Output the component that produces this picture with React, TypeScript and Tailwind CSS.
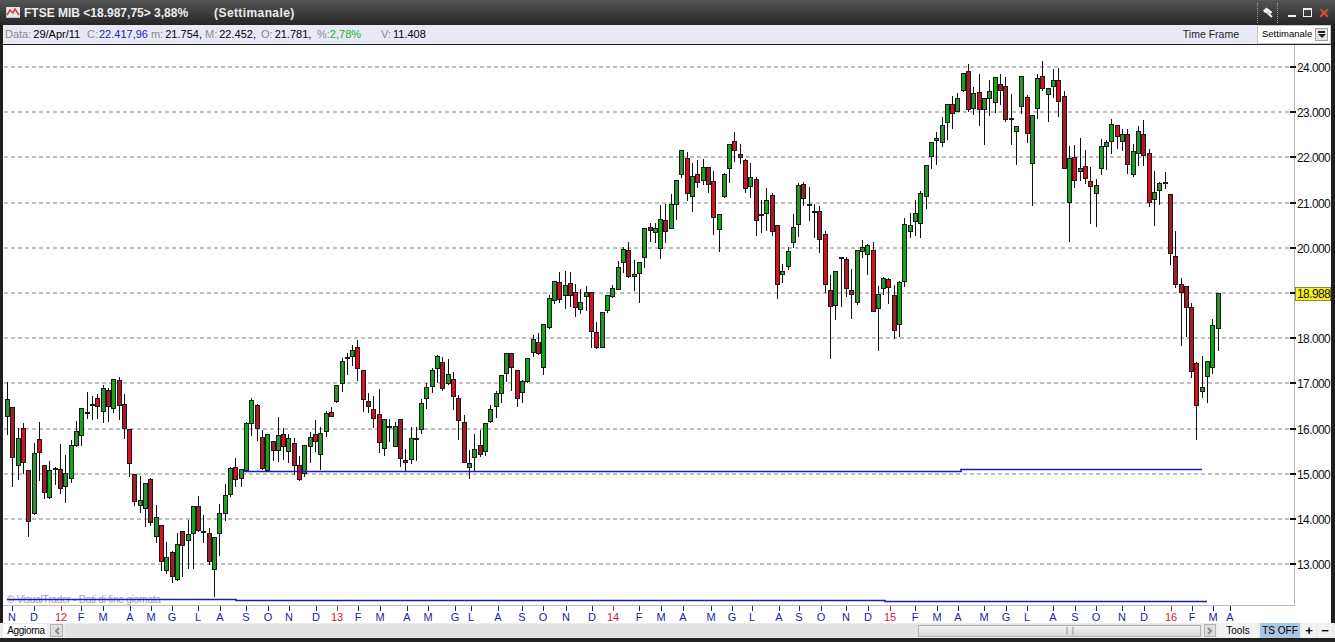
const FONT = "font-['Liberation_Sans',Arial,sans-serif]";

type Row = [number, number, number, number, string];

// candles, read off in 3x crop units: [wick top, wick bottom, body top, body bottom, colour]
const groups: { base: number; rows: Row[] }[] = [
  {
    base: 370,
    rows: [
      [35, 195, 88, 142, "g"], [110, 350, 112, 265, "d"], [175, 330, 205, 287, "g"], [160, 312, 175, 280, "r"],
      [300, 500, 301, 455, "d"], [218, 436, 250, 431, "g"], [156, 332, 208, 248, "r"], [285, 388, 286, 370, "d"],
      [273, 386, 301, 385, "G"], [292, 345, 293, 299, "d"], [222, 372, 298, 358, "d"], [255, 398, 310, 352, "g"],
      [210, 338, 226, 328, "G"], [152, 232, 184, 228, "g"], [115, 228, 115, 199, "G"], [65, 148, 125, 128, "k"],
      [78, 150, 103, 105, "k"], [72, 148, 85, 112, "r"], [45, 158, 55, 125, "g"], [55, 155, 61, 112, "d"],
      [28, 128, 28, 118, "G"], [22, 150, 31, 109, "d"], [72, 207, 103, 178, "d"], [178, 322, 178, 283, "r"],
      [313, 408, 313, 397, "d"], [318, 428, 391, 409, "g"], [338, 470, 340, 418, "g"], [325, 467, 328, 458, "d"],
      [405, 520, 442, 500, "g"], [466, 602, 466, 577, "r"], [516, 612, 562, 604, "g"], [543, 640, 547, 620, "d"],
      [490, 632, 523, 631, "G"], [483, 620, 484, 529, "d"], [450, 597, 493, 512, "g"], [408, 597, 409, 493, "G"],
      [378, 485, 409, 484, "d"], [435, 518, 484, 487, "k"], [475, 586, 490, 575, "d"], [502, 680, 502, 601, "g"],
      [403, 557, 430, 493, "G"], [343, 452, 374, 433, "G"], [290, 380, 295, 376, "g"], [264, 352, 292, 329, "r"],
      [298, 350, 298, 328, "g"], [155, 305, 160, 302, "G"], [85, 197, 91, 163, "G"], [103, 212, 105, 178, "d"],
    ],
  },
  {
    base: 270,
    rows: [
      [480, 600, 502, 598, "d"], [492, 604, 493, 603, "G"], [514, 572, 514, 542, "d"], [442, 575, 496, 544, "g"],
      [474, 570, 492, 532, "r"], [492, 578, 505, 545, "g"], [505, 615, 520, 587, "d"], [558, 632, 586, 631, "r"],
      [526, 620, 526, 613, "g"], [487, 578, 502, 530, "g"], [450, 545, 493, 517, "r"], [470, 600, 488, 556, "g"],
      [422, 502, 430, 485, "g"], [412, 440, 427, 440, "r"], [346, 398, 346, 397, "g"], [265, 365, 273, 341, "g"],
      [248, 314, 262, 265, "k"], [225, 288, 241, 260, "g"], [210, 332, 232, 298, "r"], [300, 425, 301, 391, "r"],
      [370, 428, 394, 410, "d"], [378, 475, 418, 446, "r"], [358, 548, 433, 520, "r"], [446, 558, 448, 538, "g"],
      [447, 515, 468, 470, "k"], [455, 532, 469, 530, "g"], [448, 592, 448, 566, "d"], [538, 605, 571, 578, "d"],
      [472, 582, 505, 571, "G"], [470, 573, 505, 509, "k"], [388, 492, 400, 479, "G"], [338, 417, 352, 386, "G"],
      [295, 368, 300, 352, "g"], [256, 338, 259, 298, "G"], [262, 362, 277, 356, "d"], [267, 345, 313, 341, "g"],
      [305, 420, 328, 382, "r"], [376, 510, 385, 454, "d"], [436, 578, 457, 578, "d"], [540, 626, 580, 593, "g"],
      [492, 606, 538, 563, "g"], [480, 560, 526, 554, "d"], [458, 558, 460, 547, "G"], [406, 460, 418, 456, "g"],
      [362, 444, 370, 412, "g"], [314, 398, 315, 371, "G"], [250, 336, 250, 313, "g"], [250, 362, 250, 295, "d"],
      [300, 410, 301, 386, "r"],
    ],
  },
  {
    base: 320,
    rows: [
      [180, 248, 183, 218, "g"], [113, 190, 115, 185, "G"], [45, 110, 58, 100, "g"], [40, 105, 67, 103, "d"],
      [12, 165, 13, 143, "G"],
    ],
  },
  {
    base: 130,
    rows: [
      [495, 597, 505, 595, "G"], [452, 522, 454, 512, "g"], [427, 518, 457, 510, "r"], [423, 537, 466, 497, "g"],
      [427, 530, 460, 497, "d"], [462, 560, 487, 533, "r"], [478, 552, 515, 539, "g"], [468, 542, 487, 500, "g"],
      [487, 653, 487, 607, "r"], [577, 658, 607, 653, "r"], [545, 655, 547, 653, "g"], [495, 550, 496, 542, "G"],
      [465, 505, 475, 500, "g"], [393, 480, 412, 479, "g"], [350, 428, 358, 398, "G"], [335, 443, 361, 442, "d"],
      [390, 482, 433, 442, "g"], [397, 518, 397, 433, "G"], [293, 413, 295, 385, "g"], [278, 335, 290, 302, "d"],
      [280, 338, 295, 308, "g"], [225, 388, 268, 358, "G"], [222, 340, 271, 307, "d"], [192, 298, 223, 298, "G"],
      [150, 270, 151, 226, "g"], [60, 145, 61, 136, "g"], [65, 212, 85, 193, "r"], [100, 245, 137, 200, "g"],
      [90, 173, 133, 160, "r"], [88, 165, 112, 154, "G"], [110, 188, 112, 166, "d"], [124, 315, 154, 265, "r"],
      [253, 365, 253, 301, "G"], [130, 205, 133, 202, "g"], [42, 160, 43, 118, "G"], [7, 95, 34, 62, "r"],
      [42, 102, 73, 85, "d"], [88, 188, 91, 176, "r"], [100, 203, 142, 170, "g"], [140, 318, 148, 272, "d"],
      [210, 308, 253, 257, "k"], [175, 302, 211, 253, "G"],
      [190, 318, 196, 305, "d"], [285, 506, 286, 464, "r"], [403, 460, 424, 434, "g"], [352, 420, 364, 410, "G"],
      [252, 355, 292, 338, "g"], [160, 320, 166, 284, "g"], [156, 228, 163, 208, "d"], [172, 272, 222, 224, "k"],
      [222, 323, 244, 248, "k"], [228, 368, 244, 329, "d"], [304, 488, 313, 464, "r"], [435, 686, 481, 530, "d"],
      [422, 570, 424, 529, "g"], [382, 530, 382, 386, "k"], [380, 502, 388, 478, "d"], [418, 566, 481, 494, "d"],
      [360, 526, 361, 520, "g"], [330, 383, 352, 365, "g"], [343, 435, 344, 374, "G"], [337, 545, 361, 545, "r"],
      [468, 662, 493, 536, "g"], [442, 494, 443, 478, "G"], [445, 521, 446, 473, "r"], [465, 626, 496, 602, "d"],
      [454, 622, 455, 584, "G"], [265, 470, 283, 455, "G"], [248, 323, 286, 307, "g"], [210, 318, 250, 275, "g"],
    ],
  },
  {
    base: 55,
    rows: [
      [408, 548, 414, 508, "G"], [330, 461, 330, 425, "g"], [262, 342, 262, 305, "G"], [232, 330, 250, 258, "g"],
      [187, 275, 210, 263, "g"], [148, 255, 148, 203, "G"], [123, 222, 148, 176, "r"], [115, 172, 130, 172, "g"],
      [53, 110, 54, 108, "G"], [27, 172, 48, 166, "d"], [97, 180, 115, 161, "g"], [57, 213, 112, 166, "r"],
      [128, 270, 130, 164, "g"], [75, 183, 109, 131, "g"], [65, 175, 67, 143, "G"], [57, 150, 88, 107, "d"],
    ],
  },
  {
    base: 50,
    rows: [
      [82, 215, 109, 209, "d"], [132, 285, 205, 209, "k"], [228, 345, 229, 245, "g"], [78, 192, 79, 172, "g"],
      [135, 278, 142, 253, "r"], [196, 467, 196, 341, "g"], [72, 206, 85, 176, "G"], [33, 122, 79, 118, "r"],
      [115, 215, 115, 136, "g"], [57, 143, 91, 112, "G"], [54, 200, 91, 155, "r"], [124, 358, 139, 358, "d"],
      [288, 575, 325, 460, "G"], [286, 413, 322, 394, "r"], [265, 392, 355, 367, "g"], [300, 402, 349, 388, "r"],
      [352, 521, 394, 412, "r"], [387, 530, 406, 433, "g"], [268, 375, 289, 358, "G"], [270, 360, 277, 290, "g"],
      [208, 311, 223, 277, "G"], [225, 296, 226, 262, "r"], [238, 304, 253, 277, "g"], [238, 371, 253, 346, "d"],
      [282, 382, 304, 376, "G"], [228, 347, 244, 313, "g"], [210, 347, 253, 319, "d"], [298, 470, 310, 458, "r"],
      [363, 527, 427, 451, "g"], [397, 464, 398, 424, "g"], [366, 417, 397, 403, "d"],
    ],
  },
  {
    base: 190,
    rows: [
      [13, 225, 13, 193, "d"], [123, 295, 199, 284, "d"], [265, 467, 283, 308, "d"], [288, 442, 289, 355, "d"],
      [340, 563, 352, 547, "d"], [517, 750, 518, 647, "r"], [498, 625, 592, 607, "g"], [514, 638, 514, 562, "G"],
      [388, 552, 406, 535, "G"], [310, 482, 310, 418, "g"],
    ],
  },
];

const FILL: Record<string, string> = {
  g: "#2c9230",
  G: "#10a816",
  r: "#dc0f1c",
  d: "#a31f28",
  k: "#111111",
};

const candles = groups.flatMap((g) =>
  g.rows.map((r) => ({
    wt: Math.round(g.base + r[0] / 3),
    wb: Math.round(g.base + r[1] / 3),
    bt: Math.round(g.base + r[2] / 3),
    bb: Math.round(g.base + r[3] / 3),
    c: r[4],
  })),
);

const levels: [string, number][] = [
  ["24.000", 67], ["23.000", 112], ["22.000", 157], ["21.000", 203], ["20.000", 248],
  ["", 293], ["18.000", 338], ["17.000", 383], ["16.000", 429], ["15.000", 474],
  ["14.000", 519], ["13.000", 564],
];

const months: [string, number][] = [
  ["N", 12], ["D", 34], ["12", 61], ["F", 81], ["M", 103], ["A", 130], ["M", 151], ["G", 172], ["L", 198], ["A", 220],
  ["S", 246], ["O", 268], ["N", 289], ["D", 316], ["13", 337], ["F", 358], ["M", 380], ["A", 407], ["M", 428], ["G", 455],
  ["L", 471], ["A", 498], ["S", 522], ["O", 543], ["N", 566], ["D", 592], ["14", 613], ["F", 639], ["M", 661], ["A", 683],
  ["M", 711], ["G", 732], ["L", 752], ["A", 779], ["S", 799], ["O", 821], ["N", 846], ["D", 868], ["15", 890], ["F", 915],
  ["M", 937], ["A", 958], ["M", 984], ["G", 1006], ["L", 1027], ["A", 1053], ["S", 1075], ["O", 1096], ["N", 1122],
  ["D", 1144], ["16", 1171], ["F", 1192], ["M", 1213], ["A", 1230],
];

function Chart() {
  return (
    <svg viewBox="3 45 1328 578" width={1328} height={578} className="block">
      <rect x={3} y={45} width={1328} height={578} fill="#ffffff" />
      {levels.map(([, y]) => (
        <line key={y} x1={4} x2={1290} y1={y} y2={y} stroke="#c0c0c0" strokeWidth={2} strokeDasharray="4 3" />
      ))}
      <g shapeRendering="crispEdges">
        {candles.map((k, i) => {
          const cx = Math.round(7 + i * 5.31);
          return (
            <g key={i}>
              <rect x={cx} y={k.wt} width={1} height={Math.max(k.wb - k.wt, 1)} fill="#111111" />
              <rect
                x={cx - 1.5}
                y={k.bt + 0.5}
                width={4}
                height={Math.max(k.bb - k.bt - 1, 1)}
                fill={FILL[k.c]}
                stroke="#1a1a1a"
                strokeWidth={1}
              />
            </g>
          );
        })}
      </g>

      <text x={7} y={603} fontFamily="Liberation Sans, Arial, sans-serif" fontSize={10} letterSpacing={-0.2} fill="#9c9cc8">
        © VisualTrader - Dati di fine giornata
      </text>

      <g fill="none" stroke="#1c1cb0" strokeWidth={1.6}>
        <path d="M243 471.5H961V469.5H1202" />
        <path d="M7 599.5H236V600.5H885V601.5H1207" />
      </g>

      <g shapeRendering="crispEdges">
        <rect x={1294} y={45} width={1} height={560} fill="#b8b8b8" />
        <rect x={3} y={605} width={1292} height={1} fill="#bcbcbc" />
        {levels.map(([, y]) => (
          <rect key={y} x={1290} y={y - 1} width={6} height={2} fill="#111111" />
        ))}
        {months.map(([m, x], i) => (
          <rect key={i} x={x} y={606} width={1} height={5} fill={m.length === 2 ? "#cc2233" : "#222266"} />
        ))}
      </g>

      <g fontFamily="Liberation Sans, Arial, sans-serif" fontSize={12} letterSpacing={-0.6} fill="#111111">
        {levels.map(([label, y]) =>
          label ? (
            <text key={y} x={1297} y={y + 5}>
              {label}
            </text>
          ) : null,
        )}
      </g>

      <rect x={1295.5} y={287.5} width={35} height={13} fill="#f9f21c" stroke="#8a8a30" />
      <text x={1297} y={298} fontFamily="Liberation Sans, Arial, sans-serif" fontSize={12} letterSpacing={-0.6} fill="#111111">
        18.988
      </text>

      <g fontFamily="Liberation Sans, Arial, sans-serif" fontSize={11} textAnchor="middle">
        {months.map(([m, x], i) => (
          <text key={i} x={x} y={621} fill={m.length === 2 ? "#d01a2c" : "#1c1ca8"}>
            {m}
          </text>
        ))}
      </g>
    </svg>
  );
}

function InfoCell({ label, value, width, tone = "text-black" }: { label: string; value: string; width: string; tone?: string }) {
  return (
    <div className={`flex shrink-0 overflow-hidden whitespace-nowrap ${width}`}>
      <span className="text-[#8a8a8a]">{label}</span>
      <span className={tone}>{value}</span>
    </div>
  );
}

function ChartIcon() {
  return (
    <svg width={14} height={11} viewBox="0 0 14 11">
      <rect x={0} y={0} width={14} height={11} fill="#e4e8f4" />
      <path d="M0 0v11h14" fill="none" stroke="#8f9ac8" />
      <path d="M1 8 4 3l3 3 2-4 4 6" fill="none" stroke="#d8402a" strokeWidth={1.5} />
    </svg>
  );
}

function HammerIcon() {
  return (
    <svg width={11} height={11} viewBox="0 0 11 11">
      <path d="M1 3.5 4.5 0.5 10.5 5 8.5 7 5.5 4.5 3 6Z" fill="#f2f2f2" />
      <path d="M4.5 5 10 10" stroke="#f2f2f2" strokeWidth={2} />
    </svg>
  );
}

export default function App() {
  return (
    <div className={`flex h-[642px] w-[1335px] flex-col overflow-hidden bg-[#1e1e1e] ${FONT}`}>
      {/* Title bar */}
      <header className="flex h-[25px] shrink-0 items-center bg-gradient-to-b from-[#565656] to-[#262626] pl-[6px] text-[#ececec]">
        <ChartIcon />
        <span className="ml-[4px] text-[12px] font-bold">FTSE MIB &lt;18.987,75&gt; 3,88%</span>
        <span className="ml-[26px] text-[12px] font-bold tracking-[0.4px]">(Settimanale)</span>
        <div className="ml-auto flex items-center">
          <div className="flex h-[20px] w-[21px] items-center justify-center border-x border-dotted border-[#9a9a9a]">
            <HammerIcon />
          </div>
          <div className="ml-[10px] h-[2px] w-[8px] translate-y-[3px] bg-[#f0f0f0]" />
          <div className="ml-[7px] h-[9px] w-[9px] border border-t-2 border-[#f0f0f0]" />
          <div className="ml-[6px] mr-[7px] w-[10px] text-center text-[14px] leading-none font-bold text-[#d8502c]">✕</div>
        </div>
      </header>

      <div className="flex min-h-0 flex-1 flex-col pl-[3px] pr-[4px]">
        {/* Quote strip */}
        <div className="flex h-[20px] shrink-0 items-center border-b border-[#222222] bg-[#e9e9f6] pl-[2px] text-[11px]">
          <InfoCell label="Data:" value="29/Apr/11" width="w-[82px]" tone="text-black pl-[2px]" />
          <InfoCell label="C:" value=" 22.417,96" width="w-[64px]" tone="text-[#1a1ab0] pl-[1px]" />
          <InfoCell label="m:" value=" 21.754," width="w-[54px]" tone="pl-[2px]" />
          <InfoCell label="M:" value=" 22.452," width="w-[56px]" tone="pl-[2px]" />
          <InfoCell label="O:" value=" 21.781," width="w-[56px]" tone="pl-[2px]" />
          <InfoCell label="%:" value="2,78%" width="w-[64px]" tone="text-[#18b030]" />
          <InfoCell label="V:" value=" 11.408" width="w-[60px]" tone="pl-[2px]" />
          <span className="ml-auto mr-[18px] text-[10.5px] text-[#222222]">Time Frame</span>
          <div className="flex h-[19px] w-[74px] items-center justify-between border border-[#c8c8c8] bg-white pl-[4px] pr-[2px] text-[9.5px] text-black">
            <span>Settimanale</span>
            <div className="flex h-[13px] w-[13px] flex-col items-center justify-center gap-[1px] border border-[#a0a0a0] bg-[#e4e4e4]">
              <div className="h-[2px] w-[7px] bg-[#222222]" />
              <div className="h-0 w-0 border-x-[4px] border-t-[4px] border-x-transparent border-t-[#222222]" />
            </div>
          </div>
        </div>

        <Chart />
      </div>

      {/* Bottom toolbar */}
      <footer className="flex h-[15px] shrink-0 items-center gap-[2px] bg-[#ececec] pl-[3px] text-[10px] text-black">
        <div className="flex h-[14px] w-[44px] items-center justify-center bg-white pl-[2px] tracking-[-0.3px]">Aggiorna</div>
        <div className="ml-[1px] flex h-[13px] w-[13px] items-center justify-center border border-[#b0b0b0] bg-[#dedede] text-[#8a8a8a]">
          <svg width={6} height={8} viewBox="0 0 6 8">
            <path d="M5 1 2 4l3 3" fill="none" stroke="currentColor" strokeWidth={2} />
          </svg>
        </div>
        <div className="flex h-[13px] flex-1 items-center bg-[#e2e2e2]">
          <div className="ml-[853px] flex h-[12px] w-[283px] items-center justify-center border border-[#b4b4b4] bg-gradient-to-b from-[#f2f2f2] to-[#d8d8d8]">
            <div className="ml-[20px] h-[8px] w-[8px] border-x-2 border-[#c0c0c0]" />
          </div>
        </div>
        <div className="flex h-[13px] w-[12px] items-center justify-center border border-[#b0b0b0] bg-[#dedede] text-[#8a8a8a]">
          <svg width={6} height={8} viewBox="0 0 6 8">
            <path d="M1 1l3 3-3 3" fill="none" stroke="currentColor" strokeWidth={2} />
          </svg>
        </div>
        <div className="flex h-[15px] w-[40px] items-center justify-center bg-[#f2f2f2]">Tools</div>
        <div className="flex h-[15px] w-[40px] items-center justify-center bg-[#a9c6e4]">TS OFF</div>
        <div className="flex h-[15px] w-[14px] items-center justify-center bg-[#f2f2f2] text-[13px] font-bold">+</div>
        <div className="mr-[3px] flex h-[15px] w-[14px] items-center justify-center bg-[#f2f2f2] text-[13px] font-bold">−</div>
      </footer>
      <div className="h-[4px] shrink-0 bg-[#222222]" />
    </div>
  );
}
